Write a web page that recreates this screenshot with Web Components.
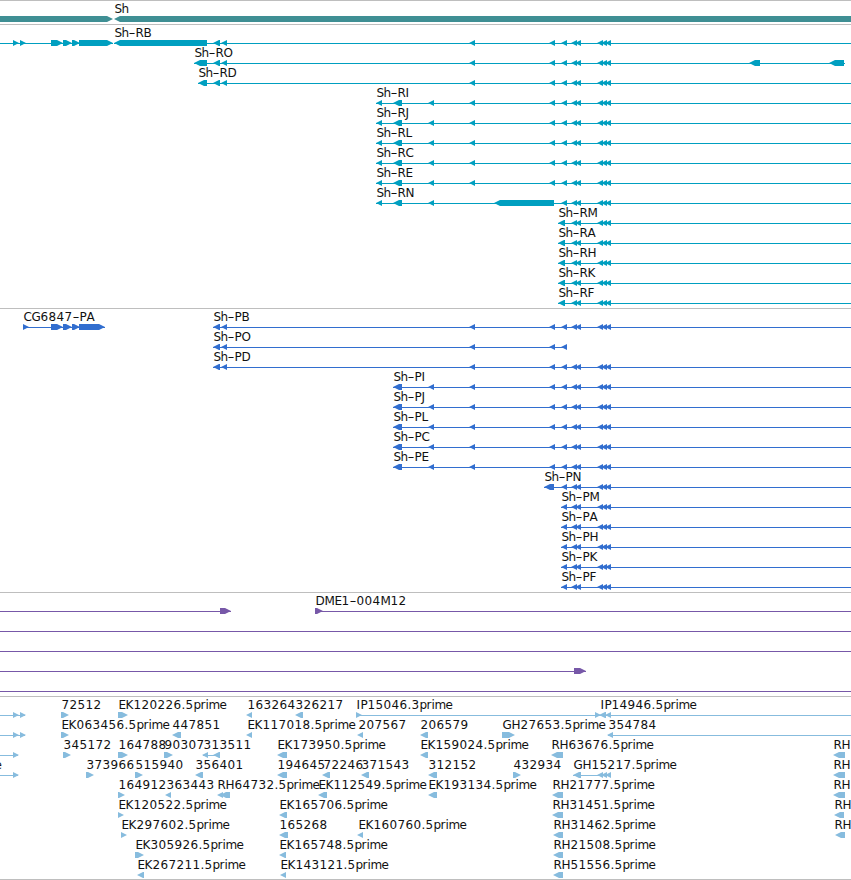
<!DOCTYPE html>
<html lang="en">
<head>
<meta charset="utf-8">
<title>Sh region</title>
<style>
  body {
    margin: 0;
    background: #fff;
    overflow: hidden;
  }
</style>
</head>
<body>
<genome-browser></genome-browser>

<script>
// width of each character in a label, whole pixels
const ADVANCE = {
  S: 7, h: 7, '-': 7, R: 8, B: 8, O: 9, D: 9, I: 4, J: 4, L: 7, C: 8, E: 7, N: 9, M: 10,
  A: 8, H: 9, K: 8, F: 7, P: 7, G: 9, '.': 4, p: 7, r: 5, i: 3, m: 11, e: 7
};

// one arrow: '<' points left, '>' points right
function arrow(dir, a, b) {
  const head = Math.min(b - a, 6);
  if (dir === '<') {
    return `<path d="M${a} 18L${a + head} 15H${b}V21H${a + head}Z"/>`;
  }
  return `<path d="M${b} 18L${b - head} 15H${a}V21H${b - head}Z"/>`;
}

function label(x, text) {
  let out = '';
  let pos = x + 0.4;
  for (const c of text) {
    // the hyphen is stretched to fill its cell
    const stretch = c === '-' ? ' textLength="7" lengthAdjust="spacingAndGlyphs"' : '';
    out += `<tspan x="${pos}"${stretch}>${c}</tspan>`;
    pos += ADVANCE[c] || 8;
  }
  return `<text y="12">${out}</text>`;
}

// a row of features: { text, x, line: [from, to], arrows: '<213-220 <221-227' }
class FeatureLane extends HTMLElement {
  constructor() {
    super();
    this.attachShadow({ mode: 'open' });
  }

  set features(data) {
    this._features = data;
    this.render();
  }

  render() {
    let shapes = '';
    let labels = '';

    this._features.forEach(f => {
      if (f.line) {
        shapes += `<rect x="${f.line[0]}" y="18" width="${f.line[1] - f.line[0]}" height="1"/>`;
      }
      if (f.arrows) {
        f.arrows.split(' ').forEach(s => {
          const [a, b] = s.slice(1).split('-').map(Number);
          shapes += arrow(s[0], a, b);
        });
      }
      if (f.text) labels += label(f.x, f.text);
    });

    this.shadowRoot.innerHTML = `
      <style>
        :host {
          display: block;
          height: 20px;
        }
        svg {
          display: block;
          width: 100%;
          height: 100%;
          overflow: visible;
          fill: var(--track-color);
        }
        text {
          font: 12px "DejaVu Sans", sans-serif;
          fill: #111;
        }
      </style>
      <svg>${shapes}${labels}</svg>
    `;
  }
}

customElements.define('feature-lane', FeatureLane);

class GenomeTrack extends HTMLElement {
  constructor() {
    super();
    this.attachShadow({ mode: 'open' });
    this.shadowRoot.innerHTML = `
      <style>
        :host {
          display: flex;
          flex-direction: column;
          border-top: 1px solid #bebebe;
          padding-bottom: 3px;
        }
        :host(:last-of-type) {
          padding-bottom: 2px;
          border-bottom: 1px solid #bebebe;
        }
      </style>
      <slot></slot>
    `;
  }

  set lanes(data) {
    data.forEach(features => {
      const lane = document.createElement('feature-lane');
      lane.features = features;
      this.appendChild(lane);
    });
  }
}

customElements.define('genome-track', GenomeTrack);

const END = 851;

// exons shared by the Sh isoforms
const TAIL = '<571-577 <575-581 <597-603 <601-607 <605-611';
const TAIL2 = '<561-567 ' + TAIL;
const MID = '<469-475 <549-555 ' + TAIL2;
const FRONT = '<213-220 <221-227 ' + MID;

const iso = (text, x, arrows, to = END) => [{ text, x, line: [x, to], arrows }];
const est = (text, x, arrows, line) => ({ text, x, arrows, line });

const genes = [
  [
    { arrows: '>0-113' },
    { text: 'Sh', x: 114, arrows: '<114-857' }
  ]
];

const transcripts = [
  [
    { line: [0, 113], arrows: '>13-19 >20-26 >51-63 >63-72 >72-80 >79-113' },
    { text: 'Sh-RB', x: 114, line: [114, END], arrows: '<114-207 ' + FRONT }
  ],
  iso('Sh-RO', 194, '<194-207 ' + FRONT + ' <749-760 <829-844', 845),
  iso('Sh-RD', 198, '<198-207 ' + FRONT),
  ...['RI', 'RJ', 'RL', 'RC', 'RE'].map(n => iso('Sh-' + n, 376, '<376-382 <393-402 <428-434 ' + MID)),
  iso('Sh-RN', 376, '<376-382 <393-402 <428-434 <494-554 ' + TAIL2),
  ...['RM', 'RA', 'RH', 'RK', 'RF'].map(n => iso('Sh-' + n, 558, '<558-565 ' + TAIL))
];

const proteins = [
  [
    { text: 'CG6847-PA', x: 23, line: [23, 105], arrows: '>23-29 >51-63 >63-72 >72-80 >79-105' },
    ...iso('Sh-PB', 213, FRONT)
  ],
  iso('Sh-PO', 213, '<213-220 <221-227 <469-475 <549-555 <561-567', 567),
  iso('Sh-PD', 213, FRONT),
  ...['PI', 'PJ', 'PL', 'PC', 'PE'].map(n => iso('Sh-' + n, 393, '<393-402 <428-434 ' + MID)),
  iso('Sh-PN', 544, '<544-554 ' + TAIL2),
  ...['PM', 'PA', 'PH', 'PK', 'PF'].map(n => iso('Sh-' + n, 561, TAIL2))
];

const clones = [
  [
    { line: [0, 231], arrows: '>220-231' },
    { text: 'DME1-004M12', x: 315, line: [315, END], arrows: '>315-323' }
  ],
  [{ line: [0, END] }],
  [{ line: [0, END] }],
  [{ line: [0, 586], arrows: '>574-586' }],
  [{ line: [0, END] }]
];

const ests = [
  [
    { line: [0, 25], arrows: '>13-19 >20-26' },
    est('72512', 61, '>61-69'),
    est('EK120226.5prime', 118, '>118-128'),
    est('163264', 247, '<246-252'),
    est('326217', 295, '<295-303'),
    est('IP15046.3prime', 356, '>356-362 >595-601', [356, 600]),
    est('IP14946.5prime', 600, '<599-606 <605-611', [600, END])
  ],
  [
    { line: [0, 25], arrows: '>13-19 >20-26' },
    est('EK063456.5prime', 61, '>61-69'),
    est('447851', 172, '<172-181'),
    est('EK117018.5prime', 247, '<246-252'),
    est('207567', 358, '<357-363'),
    est('206579', 420, '<420-428'),
    est('GH27653.5prime', 502, '>502-515'),
    est('354784', 608, '<607-613', [608, END])
  ],
  [
    { line: [0, 18], arrows: '>13-19' },
    est('345172', 63, '>63-71'),
    est('164788', 118, '>118-128'),
    est('90307', 164, '>164-173'),
    est('313511', 203, '<202-208 <213-220', [203, 220]),
    est('EK173950.5prime', 277, '<277-287'),
    est('EK159024.5prime', 420, '<420-428'),
    est('RH63676.5prime', 551, '<551-563'),
    est('RH', 833, '<833-845')
  ],
  [
    est('e', -6, '>13-19', [0, 18]),
    est('373966', 86, '>86-94'),
    est('515940', 135, '>135-143'),
    est('356401', 195, '<195-203'),
    est('194645', 277, '<277-287'),
    est('72246', 323, '<322-330'),
    est('371543', 361, '<361-369'),
    est('312152', 428, '<428-437'),
    est('432934', 513, '>513-521'),
    est('GH15217.5prime', 573, '<573-581 <597-603 <601-607 <605-611', [573, 611]),
    est('RH', 833, '<833-845')
  ],
  [
    est('164912', 118, '>118-125'),
    est('363443', 166, '<165-171'),
    est('RH64732.5prime', 217, '<217-223 <220-230'),
    est('EK112549.5prime', 318, '<318-327'),
    est('EK193134.5prime', 428, '<428-437'),
    est('RH21777.5prime', 552, '<552-563'),
    est('RH', 833, '<833-845')
  ],
  [
    est('EK120522.5prime', 118, '>118-124'),
    est('EK165706.5prime', 279, '<279-287'),
    est('RH31451.5prime', 552, '<552-563'),
    est('RH', 834, '<834-844')
  ],
  [
    est('EK297602.5prime', 121, '>121-127'),
    est('165268', 279, '<279-288'),
    est('EK160760.5prime', 358, '<357-363'),
    est('RH31462.5prime', 553, '<553-563'),
    est('RH', 834, '<835-845')
  ],
  [
    est('EK305926.5prime', 135, '>135-144'),
    est('EK165748.5prime', 279, '<279-286'),
    est('RH21508.5prime', 553, '<553-563')
  ],
  [
    est('EK267211.5prime', 137, '<137-144'),
    est('EK143121.5prime', 280, '<280-286'),
    est('RH51556.5prime', 553, '<553-563')
  ]
];

const TRACKS = [
  { color: '#3f8f94', lanes: genes },
  { color: '#009fc0', lanes: transcripts },
  { color: '#326ecf', lanes: proteins },
  { color: '#7758a8', lanes: clones },
  { color: '#87bcde', lanes: ests }
];

class GenomeBrowser extends HTMLElement {
  constructor() {
    super();
    this.attachShadow({ mode: 'open' });
    this.shadowRoot.innerHTML = `
      <style>
        :host {
          display: flex;
          flex-direction: column;
          width: 851px;
          overflow: hidden;
        }
      </style>
    `;
    TRACKS.forEach(t => {
      const track = document.createElement('genome-track');
      track.style.setProperty('--track-color', t.color);
      track.lanes = t.lanes;
      this.shadowRoot.appendChild(track);
    });
  }
}

customElements.define('genome-browser', GenomeBrowser);
</script>
</body>
</html>
